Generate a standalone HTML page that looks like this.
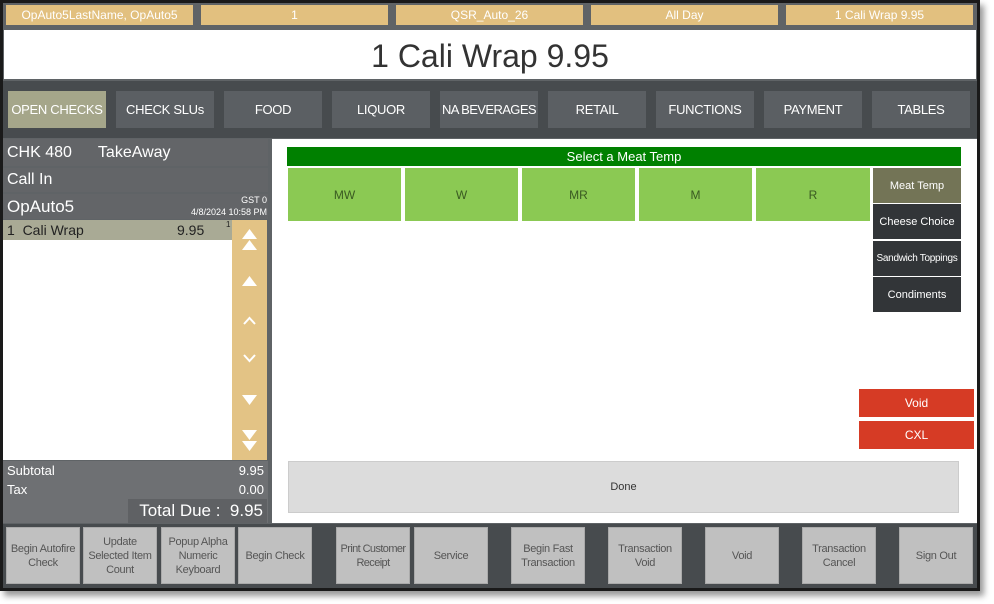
<!DOCTYPE html><html><head><style>
*{box-sizing:border-box;margin:0;padding:0}
body{width:994px;height:604px;background:#fff;font-family:"Liberation Sans",sans-serif;position:relative;overflow:hidden}
div{position:absolute}
.c{display:flex;align-items:center;justify-content:center;text-align:center}
.tb{background:#e2c07f;color:#fff;font-size:12px;top:5px;height:20px;width:187px}
.nv{background:#5b5f63;color:#fff;font-size:13px;letter-spacing:-0.3px;white-space:nowrap;top:91px;height:37px;width:98px}
.g{background:#8bc953;color:#3a5a22;font-size:12px;top:168px;height:53px;width:113px}
.tab{background:#323538;color:#fff;font-size:11px;left:873px;width:88px;height:35px}
.bb{background:#c0c0c0;color:#555;font-size:11px;letter-spacing:-0.3px;top:527px;height:57px;width:74px;line-height:14px;border:1px solid #aaa}
.lr{left:3px;width:265px;background:#636568;color:#fff;font-size:16px;padding-left:4px;display:flex;align-items:center}
.ar{left:232px;width:35px;color:#fff;font-size:16px}
</style></head><body>
<div style="left:0;top:0;width:980px;height:591px;background:#1a1a1a;box-shadow:4px 5px 6px #999"></div>
<div style="left:3px;top:3px;width:974px;height:585px;background:#5f6366"></div>
<div class="tb c" style="left:6px">OpAuto5LastName, OpAuto5</div>
<div class="tb c" style="left:201px">1</div>
<div class="tb c" style="left:396px">QSR_Auto_26</div>
<div class="tb c" style="left:591px">All Day</div>
<div class="tb c" style="left:786px">1 Cali Wrap 9.95</div>
<div class="c" style="left:4px;top:30px;width:972px;height:49px;background:#fff;color:#333;font-size:32px;padding-top:4px">1 Cali Wrap 9.95</div>
<div style="left:3px;top:81px;width:974px;height:57px;background:#474b4e"></div>
<div class="nv c" style="left:8px;background:#a5a68a">OPEN CHECKS</div>
<div class="nv c" style="left:116px">CHECK SLUs</div>
<div class="nv c" style="left:224px">FOOD</div>
<div class="nv c" style="left:332px">LIQUOR</div>
<div class="nv c" style="left:440px;letter-spacing:-0.6px">NA BEVERAGES</div>
<div class="nv c" style="left:548px">RETAIL</div>
<div class="nv c" style="left:656px">FUNCTIONS</div>
<div class="nv c" style="left:764px">PAYMENT</div>
<div class="nv c" style="left:872px">TABLES</div>
<div class="lr" style="top:139px;height:27px">CHK 480 <span style="margin-left:26px">TakeAway</span></div>
<div class="lr" style="top:168px;height:24px">Call In</div>
<div class="lr" style="top:194px;height:25px;font-size:17px">OpAuto5</div>
<div style="left:180px;top:194px;width:87px;color:#fff;font-size:9px;text-align:right;line-height:12px">GST 0<br>4/8/2024 10:58 PM</div>
<div style="left:3px;top:220px;width:229px;height:240px;background:#fff"></div>
<div style="left:3px;top:220px;width:229px;height:20px;background:#a9aa95;font-size:14px;color:#222;line-height:20px;padding-left:4px">1&nbsp;&nbsp;Cali Wrap<span style="position:absolute;left:174px">9.95</span><span style="position:absolute;left:223px;top:-5px;font-size:8px">1</span></div>
<div style="left:232px;top:220px;width:35px;height:240px;background:#e3c385"></div>
<svg style="position:absolute;left:232px;top:220px" width="35" height="240" fill="#fff" stroke="#fff">
<polygon points="10,19 25,19 17.5,9" stroke="none"/><polygon points="10,30 25,30 17.5,20" stroke="none"/>
<polygon points="10,66 25,66 17.5,56" stroke="none"/>
<polyline points="12,104 17.5,98 23,104" fill="none" stroke-width="2"/>
<polyline points="12,135 17.5,141 23,135" fill="none" stroke-width="2"/>
<polygon points="10,175 25,175 17.5,185" stroke="none"/>
<polygon points="10,210 25,210 17.5,220" stroke="none"/><polygon points="10,221 25,221 17.5,231" stroke="none"/>
</svg>
<div style="left:3px;top:461px;width:265px;height:62px;background:#6e7073"></div>
<div style="left:7px;top:463px;width:257px;color:#fff;font-size:13px">Subtotal<span style="position:absolute;right:0">9.95</span></div>
<div style="left:7px;top:482px;width:257px;color:#fff;font-size:13px">Tax<span style="position:absolute;right:0">0.00</span></div>
<div style="left:128px;top:499px;width:139px;height:24px;background:#5f6164;color:#fff;font-size:17px;line-height:24px;text-align:right;padding-right:4px">Total Due :&nbsp; 9.95</div>
<div style="left:272px;top:139px;width:705px;height:384px;background:#fff"></div>
<div class="c" style="left:287px;top:147px;width:674px;height:19px;background:#008000;color:#fff;font-size:13px">Select a Meat Temp</div>
<div class="g c" style="left:288px">MW</div>
<div class="g c" style="left:405px">W</div>
<div class="g c" style="left:522px">MR</div>
<div class="g c" style="left:639px">M</div>
<div class="g c" style="left:756px;width:114px">R</div>
<div class="tab c" style="top:168px;background:#737456">Meat Temp</div>
<div class="tab c" style="top:204px">Cheese Choice</div>
<div class="tab c" style="top:241px;font-size:10px;letter-spacing:-0.3px;white-space:nowrap">Sandwich Toppings</div>
<div class="tab c" style="top:277px">Condiments</div>
<div class="c" style="left:859px;top:389px;width:115px;height:28px;background:#d63b25;color:#fff;font-size:12px">Void</div>
<div class="c" style="left:859px;top:421px;width:115px;height:28px;background:#d63b25;color:#fff;font-size:12px">CXL</div>
<div class="c" style="left:288px;top:461px;width:671px;height:52px;background:#dcdcdc;border:1px solid #ccc;color:#333;font-size:11px">Done</div>
<div style="left:3px;top:524px;width:974px;height:64px;background:#474b4e"></div>
<div class="bb c" style="left:6px">Begin Autofire Check</div>
<div class="bb c" style="left:83px">Update Selected Item Count</div>
<div class="bb c" style="left:161px">Popup Alpha Numeric Keyboard</div>
<div class="bb c" style="left:238px">Begin Check</div>
<div class="bb c" style="left:336px;letter-spacing:-0.6px">Print Customer Receipt</div>
<div class="bb c" style="left:414px">Service</div>
<div class="bb c" style="left:511px">Begin Fast Transaction</div>
<div class="bb c" style="left:608px">Transaction Void</div>
<div class="bb c" style="left:705px">Void</div>
<div class="bb c" style="left:802px">Transaction Cancel</div>
<div class="bb c" style="left:899px">Sign Out</div>
</body></html>
